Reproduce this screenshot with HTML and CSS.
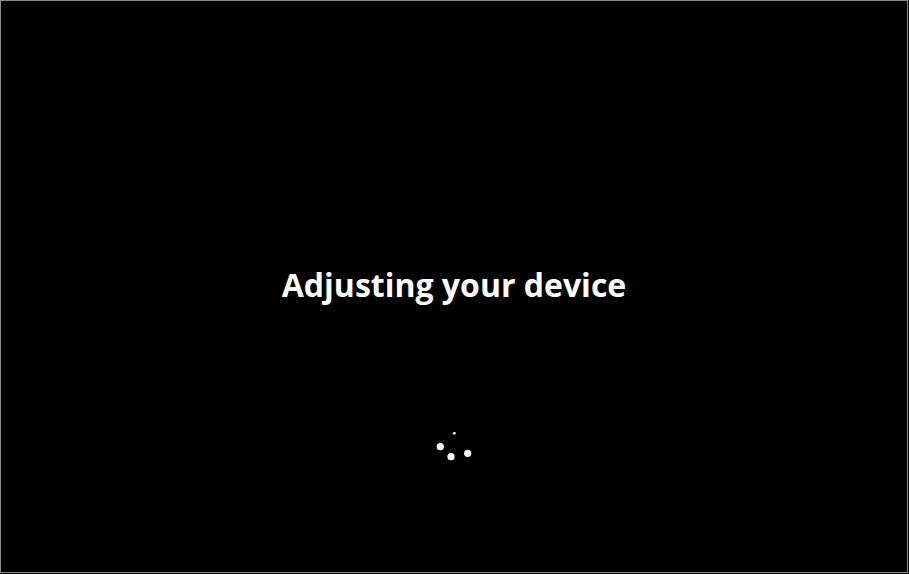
FILE: index.html
```html
<!DOCTYPE html>
<html lang="en">
<head>
<meta charset="utf-8">
<title>Adjusting your device</title>
<link rel="stylesheet" href="styles.css">
</head>
<body>
<div class="screen">
  <h1 class="title">Adjusting your device</h1>
  <div class="spinner" aria-label="Loading">
    <svg width="40" height="36" viewBox="0 0 40 36">
      <circle cx="20.3" cy="8.3" r="1.4" fill="#fff"/>
      <circle cx="6.3" cy="21.7" r="3.6" fill="#fff"/>
      <circle cx="17" cy="31.7" r="3.6" fill="#fff"/>
      <circle cx="33.7" cy="28.3" r="3.6" fill="#fff"/>
    </svg>
  </div>
</div>
</body>
</html>
```

FILE: styles.css
```css
html, body {
  margin: 0;
  padding: 0;
  background: #000;
}
.screen {
  box-sizing: border-box;
  width: 908px;
  height: 573px;
  border: 1px solid #8a8a8a;
  background: #000;
  display: flex;
  flex-direction: column;
  align-items: center;
}
.title {
  margin: 264px 0 0 0;
  font-family: "Open Sans", "Noto Sans", sans-serif;
  font-weight: 700;
  font-size: 32px;
  line-height: 40px;
  color: #fff;
  letter-spacing: 0;
}
.spinner {
  margin-top: 120px;
  width: 40px;
  height: 36px;
}
.spinner svg {
  display: block;
}
```
